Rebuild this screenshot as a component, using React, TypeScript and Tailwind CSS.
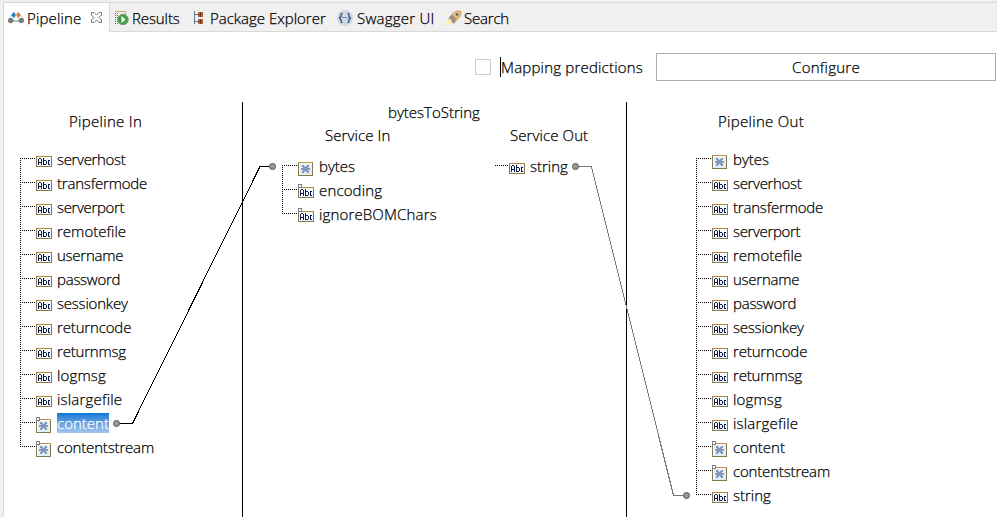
import React from "react";

type Kind = "abc" | "obj";
type Field = { name: string; kind: Kind; optional?: boolean; selected?: boolean };

const abc = (name: string): Field => ({ name, kind: "abc" });

const common = ["serverhost", "transfermode", "serverport", "remotefile", "username", "password", "sessionkey", "returncode", "returnmsg", "logmsg", "islargefile"].map(abc);

const pipelineIn: Field[] = [
  ...common,
  { name: "content", kind: "obj", optional: true, selected: true },
  { name: "contentstream", kind: "obj", optional: true },
];
const pipelineOut: Field[] = [
  { name: "bytes", kind: "obj" },
  ...common,
  { name: "content", kind: "obj", optional: true },
  { name: "contentstream", kind: "obj", optional: true },
  abc("string"),
];
const serviceIn: Field[] = [
  { name: "bytes", kind: "obj" },
  { name: "encoding", kind: "abc", optional: true },
  { name: "ignoreBOMChars", kind: "abc", optional: true },
];

const tracking: Record<string, string> = {
  serverhost: "tracking-[-0.33px]",
  transfermode: "tracking-[-0.2px]",
  serverport: "tracking-[-0.35px]",
  remotefile: "tracking-[0.02px]",
  username: "tracking-[-0.25px]",
  password: "tracking-[-0.25px]",
  sessionkey: "tracking-[-0.2px]",
  returncode: "tracking-[-0.15px]",
  returnmsg: "tracking-[-0.2px]",
  logmsg: "tracking-[0.15px]",
  encoding: "tracking-[0.15px]",
  islargefile: "tracking-[0.2px]",
  contentstream: "tracking-[-0.17px]",
  ignoreBOMChars: "tracking-[0.15px]",
};

function FieldIcon({ kind, optional }: { kind: Kind; optional?: boolean }) {
  return (
    <svg width="16" height="18" viewBox="0 0 16 18" className="mt-1 shrink-0" shapeRendering="crispEdges">
      {kind === "abc" ? (
        <>
          <rect x=".5" y="4.500" width="15" height="10" fill="#f4f8ff" stroke="#85784c" />
          <path d="M0 4.500H16" stroke="#b08a38" />
          <path d="M2.500 13V7M3 6.500H5M5.500 7V13M3 10.500H5M7.500 6V13M8 8.500H10M10.500 9V12M8 12.500H10M14 8.500H12M12.500 9V12M12 12.500H14" stroke="#0c1b48" fill="none" />
        </>
      ) : (
        <>
          <rect x=".5" y="3.500" width="14" height="13" fill="#e4edf8" stroke="#85784c" />
          <path d="M0 3.500H15" stroke="#b9954c" />
          <path d="M1.500 15.500V4.500H13.500" stroke="#fff" fill="none" />
          <path d="M3 9h9v2H3zM4 6h2v1h1v1h1V7h1V6h2v2h-1v1h-1v2h1v1h1v2H9v-1H8v-1H7v1H6v1H4v-2h1v-1h1V9H5V8H4z" fill="#8198bb" />
        </>
      )}
      {optional && <rect x=".5" y="1.500" width="3" height="3" fill="#fff" stroke="#85789b" />}
    </svg>
  );
}

function Tree({ fields }: { fields: Field[] }) {
  const single = fields.length === 1;
  return (
    <div>
      {fields.map((f, i) => (
        <div key={f.name} className="flex h-6">
          <svg width={single ? 14 : 16} height="24" className="shrink-0" shapeRendering="crispEdges">
            {!single && (
              <path d={i === 0 ? "M.5 10V24" : i === fields.length - 1 ? "M.5 0V10" : "M.5 0V24"} stroke="#000" strokeDasharray="1 1" />
            )}
            <path d="M0 10.500H16" stroke="#000" strokeDasharray="1 1" />
          </svg>
          <FieldIcon kind={f.kind} optional={f.optional} />
          <span className={"ml-[5px] mt-px h-5 leading-5 whitespace-nowrap " + (tracking[f.name] ?? "") + (f.selected ? " w-[52px] bg-gradient-to-b from-[#0078d7] to-[#a5c7ec] text-white" : "")}>{f.name}</span>
        </div>
      ))}
    </div>
  );
}

function PipelineIcon() {
  return (
    <svg width="16" height="16" viewBox="0 0 16 16">
      <path d="M5 11H11" fill="none" stroke="#3f9a62" />
      <path d="M1.500 7.500L3.500 5.500M14.500 7.500L12.500 5.500" fill="none" stroke="#b9c6cc" strokeWidth=".8" />
      <path d="M6.500 1.500V3.500H7.500V6.500H6.500V8.500L3 5Z" fill="#1680b8" />
      <path d="M9.500 1.500V3.500H8.500V6.500H9.500V8.500L13 5Z" fill="#c9812d" />
      <circle cx="2.700" cy="10.500" r="2.700" fill="#7b7b7b" />
      <circle cx="13.300" cy="10.500" r="2.700" fill="#7b7b7b" />
    </svg>
  );
}

function ResultsIcon() {
  return (
    <svg width="16" height="16" viewBox="0 0 16 16">
      <path d="M1 1.500H11.500V4" fill="none" stroke="#c9aa68" />
      <path d="M1.500 3V15M3.500 3V15" stroke="#416c9c" strokeDasharray="1 1" />
      <circle cx="9" cy="9.500" r="5.200" fill="#3fa044" stroke="#6f9b70" />
      <path d="M7.500 6V13L11.500 9.500Z" fill="#fff" />
    </svg>
  );
}

function PackageIcon() {
  return (
    <svg width="11" height="14" viewBox="0 0 11 14">
      <path d="M1.500 0V13M1 3.500H5M1 10.500H5" stroke="#65798e" fill="none" />
      <path d="M5 1H10V6H5ZM5 8H10V13H5Z" fill="#b76b3e" />
      <path d="M7.500 1V6M5 3.500H10M7.500 8V13M5 10.500H10" stroke="#703a22" />
    </svg>
  );
}

function SwaggerIcon() {
  return (
    <svg width="16" height="16" viewBox="0 0 16 16">
      <circle cx="8" cy="8" r="8" fill="#d0d8e3" />
      <path d="M5.500 3.500H5Q4 3.500 4 5V6.500L2.500 8L4 9.500V11Q4 12.500 5 12.500H5.500M10.500 3.500H11Q12 3.500 12 5V6.500L13.500 8L12 9.500V11Q12 12.500 11 12.500H10.500" fill="none" stroke="#314e7c" strokeWidth="1.300" />
      <path d="M5.500 7.500h1M7.500 7.500h1M9.500 7.500h1" stroke="#314e7c" />
    </svg>
  );
}

function RocketIcon() {
  return (
    <svg width="17" height="16" viewBox="0 0 17 16">
      <path d="M4 8L8 3Q12 0 16 1Q17 5 13 9L9 13L4 12Z" fill="#e8bd78" stroke="#b68c51" strokeWidth=".6" />
      <path d="M4 7L8 5L11 9L9 14L7 11Z" fill="#9b8c86" />
      <path d="M5 9L0 13L1 15.500L7 13Z" fill="#fff3b4" stroke="#eee0a0" strokeWidth=".5" />
      <circle cx="12" cy="4.500" r="1.300" fill="#42658b" />
    </svg>
  );
}

function Title({ children, className }: { children: React.ReactNode; className: string }) {
  return <div className={"h-5 leading-5 whitespace-nowrap " + className}>{children}</div>;
}

export default function App() {
  return (
    <div className="relative flex h-[517px] w-[997px] flex-col overflow-hidden bg-white font-['Open_Sans','Noto_Sans',sans-serif] text-[15px] font-light text-black [-webkit-text-stroke:0.25px]">
      <header className="flex h-8 shrink-0 bg-[#f0f0f0] pt-0.5">
        <div className="ml-[3px] flex h-[30px] w-[107px] items-center border-x border-t border-[#d9d9d9] bg-white pl-1">
          <PipelineIcon />
          <span className="ml-[3px] w-[55px] leading-5 tracking-[0.15px]">Pipeline</span>
          <svg width="11" height="11" viewBox="0 0 11 11" className="ml-[9px]">
            <path d="M.5 .5H3L5.500 3L8 .5H10.500V3L8 5.500L10.500 8V10.500H8L5.500 8L3 10.500H.5V8L3 5.500L.5 3V.5Z" fill="#fff" stroke="#737373" />
          </svg>
        </div>
        <div className="flex flex-1 items-center border-y border-[#d9d9d9] pl-1 pt-px">
          <ResultsIcon />
          <span className="ml-[2px] w-[61px] pt-px tracking-[-0.1px]">Results</span>
          <PackageIcon />
          <span className="ml-[6px] w-[127px] whitespace-nowrap pt-px">Package Explorer</span>
          <SwaggerIcon />
          <span className="ml-[4px] w-[88px] whitespace-nowrap pt-px tracking-[0.25px]">Swagger UI</span>
          <RocketIcon />
          <span className="ml-[2px] pt-px tracking-[-0.2px]">Search</span>
        </div>
      </header>
      <main className="flex flex-1 flex-col border-l-[3px] border-[#f0f0f0]">
        <div className="flex h-[70px] shrink-0 items-start border-l border-[#d9d9d9] pl-[471px] pt-[21px]">
          <div className="mt-[6px] h-4 w-4 border border-[#ccc]" />
          <div className="ml-[9px] mt-1 h-5 w-[156px] border-l border-black leading-5 tracking-[0.2px]">Mapping predictions</div>
          <button className="h-[28px] w-[340px] border border-[#adadad] bg-white leading-5 tracking-[0.25px]">Configure</button>
        </div>
        <div className="flex flex-1 border-l border-[#d9d9d9]">
          <section className="w-[238px] pt-[9px]">
            <Title className="pl-[65px] tracking-[0.3px]">Pipeline In</Title>
            <div className="pl-4 pt-[17px]"><Tree fields={pipelineIn} /></div>
          </section>
          <section className="w-[385px] border-x border-black">
            <Title className="pl-[145px]">bytesToString</Title>
            <div className="flex pt-[3px]">
              <div className="w-[252px]">
                <Title className="pl-[82px] tracking-[0.1px]">Service In</Title>
                <div className="pl-[39px] pt-[10px]"><Tree fields={serviceIn} /></div>
              </div>
              <div>
                <Title className="pl-[15px] tracking-[0.1px]">Service Out</Title>
                <div className="pt-[10px]"><Tree fields={[abc("string")]} /></div>
              </div>
            </div>
          </section>
          <section className="flex-1 pt-[9px]">
            <Title className="pl-[91px] tracking-[0.3px]">Pipeline Out</Title>
            <div className="pl-[69px] pt-[17px]"><Tree fields={pipelineOut} /></div>
          </section>
        </div>
      </main>
      <svg className="pointer-events-none absolute inset-0" width="997" height="517">
        <g shapeRendering="crispEdges" fill="none">
          <path d="M116 423.500H132.500L260 166.500H273" stroke="#000" />
          <path d="M576 166.500H591.500L673.500 495.500H686" stroke="#6d7681" />
        </g>
        {[[116.500, 423.500], [272.500, 166.500], [575.500, 166.500], [686.500, 495.500]].map(([x, y]) => (
          <circle key={x} cx={x} cy={y} r="3" fill="#999" stroke="#555" />
        ))}
      </svg>
    </div>
  );
}
